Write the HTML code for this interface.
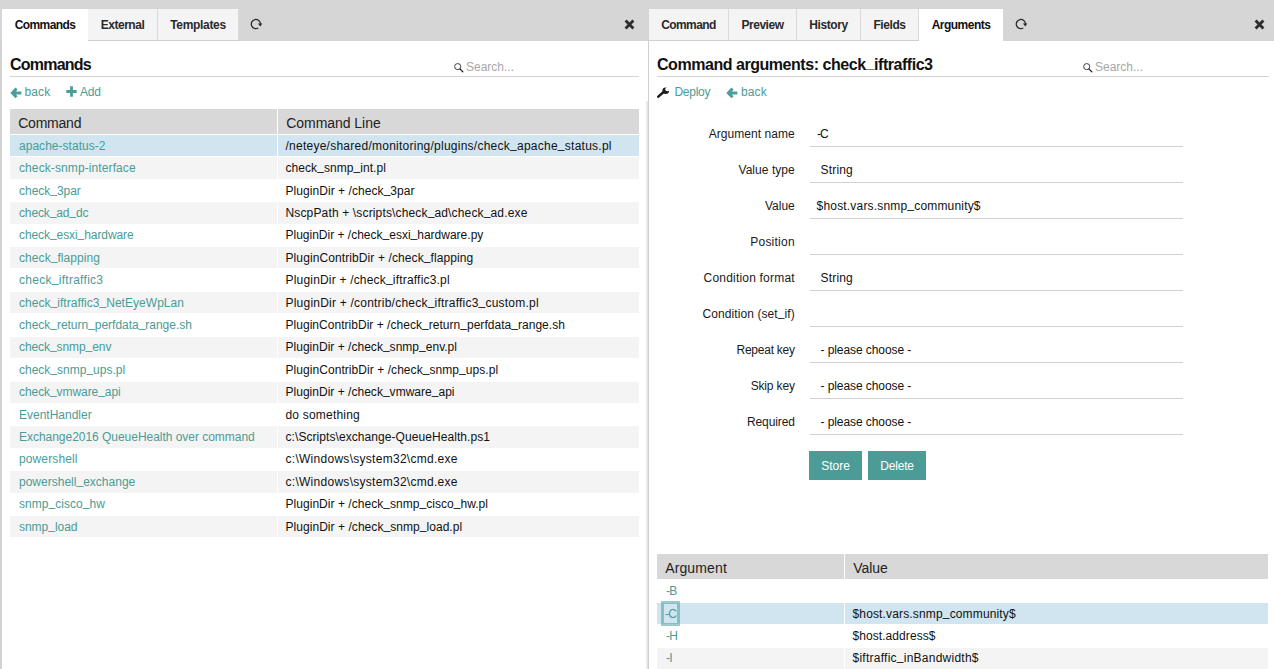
<!DOCTYPE html>
<html lang="en"><head><meta charset="utf-8"><title>Commands</title>
<style>
*{box-sizing:border-box;margin:0;padding:0}
html,body{width:1274px;height:669px;overflow:hidden;background:#fff}
body{font-family:"Liberation Sans",sans-serif;font-size:12px;color:#111;position:relative}
.t{white-space:pre}
.tabbar{position:absolute;left:0;top:0;width:1274px;height:41px;background:#d6d6d6;z-index:2}
.col{position:absolute;top:0;height:669px}
#col1{left:0;width:648px;border-left:2px solid #d2d2d2}
#col1 > *{margin-left:-2px}
#col2{left:648px;width:626px;border-left:1px solid #cfcfcf}
#col2 > *{margin-left:-1px}
#col2:before{content:"";position:absolute;left:-3px;top:101px;width:2px;bottom:0;background:linear-gradient(to right,#f4f4f4,#dedede);margin:0}
.tabs{position:absolute;left:0;top:9px;height:32px;list-style:none;width:100%;z-index:3}
.tabs li{position:absolute;top:0;height:32px;background:#f4f4f4;border-right:1px solid #dadada;border-bottom:1px solid #d0d0d0;text-align:center;line-height:31px;font-weight:bold;font-size:12px;color:#2a2a2a;white-space:nowrap}
.tabs li a{position:relative;top:1px}
.tabs li.active{background:#fff;border:0;color:#111}
.abs{position:absolute;display:block;line-height:0;z-index:3}
h1{position:absolute;top:54px;height:23px;border-bottom:1px solid #d4d4d4;font-size:16px;font-weight:bold;line-height:22px;color:#111;white-space:nowrap}
.search{position:absolute;top:60px;height:14px;font-size:12px;color:#a8a8a8;line-height:14px;white-space:nowrap}
.search svg{position:absolute;left:0;top:3px}
.search span{position:absolute;left:12px;top:0}
.actions{position:absolute;top:84px;height:16px}
.actions a{position:absolute;top:0;color:#4b9b96;font-size:12px;line-height:16px;white-space:nowrap;height:16px}
.actions a svg{position:absolute;left:0;top:3px}
.actions a svg.ib{left:-0.6px;top:2.6px}
.actions a svg.ip{top:2px}
.actions a span{position:absolute;top:0}
.list{position:absolute;font-size:12px}
.list .hd,.list .row{position:absolute;left:0;width:100%}
.list .c1,.list .c2{position:absolute;top:0;bottom:0;white-space:nowrap;overflow:visible}
.list .c1{left:0}
.list .c2{right:0}
.list .hd .c1,.list .hd .c2{background:#d8d8d8;font-size:14px;line-height:29px;padding-left:8.2px;color:#222}
.list .row .c1,.list .row .c2{line-height:22px;padding-left:9px;color:#111}
.list .row .c2{padding-left:7.5px}
.list .row a{color:#4b9b96}
.list .row.up .c1,.list .row.up .c2{line-height:20px}
.list .row.odd .c1,.list .row.odd .c2{background:#f4f4f4}
.list .row.sel .c1,.list .row.sel .c2{background:#d0e5f0}
form{position:absolute;left:0;top:0;width:100%}
.frow{position:absolute;left:0;height:28px;width:100%}
.frow label{position:absolute;left:0;width:146.8px;text-align:right;top:1px;line-height:27px;font-size:12px;color:#1a1a1a;white-space:nowrap}
.frow .inp{position:absolute;left:162px;width:373px;top:0;height:27px;border-bottom:1px solid #d0d0d0;font-size:12px;white-space:nowrap}
.frow .inp > span{position:absolute;top:1px;line-height:27px}
.btns{position:absolute;left:161px;top:451px;height:29px}
.btns button{position:absolute;top:0;height:29px;border:0;background:#4b9c97;color:#fff;font-family:inherit;font-size:12px;line-height:30px;text-align:center;padding:0}
a.focus{position:relative;display:inline-block;left:-1px}
a.focus:before{content:"";position:absolute;left:-4px;right:-3.5px;top:-2.5px;bottom:-0.5px;border:3px solid rgba(75,158,154,0.55)}
.u{position:relative;top:-0.15em}
</style></head>
<body>
<div class="tabbar"></div>
<div id="col1" class="col">
<ul class="tabs"><li class="active" style="left:2px;width:86px"><a><span class="t" style="letter-spacing:-0.62px">Commands</span></a></li><li style="left:88px;width:70px"><a><span class="t" style="letter-spacing:-0.48px">External</span></a></li><li style="left:158px;width:81px"><a><span class="t" style="letter-spacing:-0.31px">Templates</span></a></li></ul>
<span class="abs" style="left:249px;top:17px"><svg viewBox="0 0 14 14" width="14" height="14"><path d="M9.3 11 A4.6 4.6 0 1 1 11.5 6.9" fill="none" stroke="#2a2a2a" stroke-width="1.3"/><path d="M8.9 6.6 L13.3 6.6 L11.3 9.5 Z" fill="#2a2a2a"/></svg></span><span class="abs" style="left:624px;top:19px"><svg viewBox="0 0 11 11" width="11" height="11"><path d="M1.6 1.6 L9.4 9.4 M9.4 1.6 L1.6 9.4" stroke="#2d2d2d" stroke-width="2.85" fill="none"/></svg></span>
<h1 style="left:10px;width:629px"><span class="t" style="letter-spacing:-0.77px">Commands</span></h1>
<div class="search" style="left:454px"><svg viewBox="0 0 10 10" width="10" height="10"><circle cx="3.7" cy="3.6" r="3.05" fill="none" stroke="#333" stroke-width="0.95"/><path d="M6.1 6.1 L8.8 8.7" stroke="#222" stroke-width="1.3" stroke-linecap="round"/></svg><span>Search...</span></div>
<div class="actions" style="left:10px"><a style="left:1px"><svg class="ib" viewBox="0 0 11 11" width="11.8" height="11.8"><path d="M0.3 5.5 L5.1 0.5 L7.1 2.4 L5.5 4.1 L10.6 4.1 L10.6 6.9 L5.5 6.9 L7.1 8.6 L5.1 10.5 Z" fill="#4b9e9a"/></svg><span style="left:13.5px"><span class="t" style="letter-spacing:0.11px">back</span></span></a><a style="left:56px"><svg class="ip" viewBox="0 0 11 11" width="11" height="11"><path d="M4.1 0.3 H6.9 V4.1 H10.7 V6.9 H6.9 V10.7 H4.1 V6.9 H0.3 V4.1 H4.1 Z" fill="#4b9e9a"/></svg><span style="left:14px"><span class="t" style="letter-spacing:-0.18px">Add</span></span></a></div>
<div class="list" style="left:10px;top:109px;width:629px"><div class="hd" style="top:0;height:25px"><span class="c1" style="width:267px"><span class="t" style="letter-spacing:-0.22px">Command</span></span><span class="c2" style="left:268px"><span class="t" style="letter-spacing:-0.04px">Command Line</span></span></div>
<div class="row sel" style="top:26px;height:21px"><span class="c1" style="width:267px"><a><span class="t" style="letter-spacing:0.03px">apache-status-2</span></a></span><span class="c2" style="left:268px"><span class="t" style="letter-spacing:0.25px">/neteye/shared/monitoring/plugins/check<span class="u">_</span>apache<span class="u">_</span>status.pl</span></span></div>
<div class="row odd" style="top:48px;height:22px"><span class="c1" style="width:267px"><a><span class="t" style="letter-spacing:0.1px">check-snmp-interface</span></a></span><span class="c2" style="left:268px"><span class="t" style="letter-spacing:0.06px">check<span class="u">_</span>snmp<span class="u">_</span>int.pl</span></span></div>
<div class="row even" style="top:71px;height:21px"><span class="c1" style="width:267px"><a><span class="t" style="letter-spacing:-0.02px">check<span class="u">_</span>3par</span></a></span><span class="c2" style="left:268px"><span class="t" style="letter-spacing:0.06px">PluginDir + /check<span class="u">_</span>3par</span></span></div>
<div class="row odd" style="top:93px;height:22px"><span class="c1" style="width:267px"><a><span class="t" style="letter-spacing:-0.13px">check<span class="u">_</span>ad<span class="u">_</span>dc</span></a></span><span class="c2" style="left:268px"><span class="t" style="letter-spacing:0.15px">NscpPath + \scripts\check<span class="u">_</span>ad\check<span class="u">_</span>ad.exe</span></span></div>
<div class="row even up" style="top:116px;height:21px"><span class="c1" style="width:267px"><a><span class="t" style="letter-spacing:-0.08px">check<span class="u">_</span>esxi<span class="u">_</span>hardware</span></a></span><span class="c2" style="left:268px"><span class="t">PluginDir + /check<span class="u">_</span>esxi<span class="u">_</span>hardware.py</span></span></div>
<div class="row odd" style="top:138px;height:21px"><span class="c1" style="width:267px"><a><span class="t" style="letter-spacing:0.07px">check<span class="u">_</span>flapping</span></a></span><span class="c2" style="left:268px"><span class="t" style="letter-spacing:0.1px">PluginContribDir + /check<span class="u">_</span>flapping</span></span></div>
<div class="row even" style="top:160px;height:22px"><span class="c1" style="width:267px"><a><span class="t" style="letter-spacing:0.28px">check<span class="u">_</span>iftraffic3</span></a></span><span class="c2" style="left:268px"><span class="t" style="letter-spacing:0.19px">PluginDir + /check<span class="u">_</span>iftraffic3.pl</span></span></div>
<div class="row odd" style="top:183px;height:21px"><span class="c1" style="width:267px"><a><span class="t" style="letter-spacing:0.04px">check<span class="u">_</span>iftraffic3<span class="u">_</span>NetEyeWpLan</span></a></span><span class="c2" style="left:268px"><span class="t" style="letter-spacing:0.22px">PluginDir + /contrib/check<span class="u">_</span>iftraffic3<span class="u">_</span>custom.pl</span></span></div>
<div class="row even" style="top:205px;height:22px"><span class="c1" style="width:267px"><a><span class="t" style="letter-spacing:-0.02px">check<span class="u">_</span>return<span class="u">_</span>perfdata<span class="u">_</span>range.sh</span></a></span><span class="c2" style="left:268px"><span class="t" style="letter-spacing:0.03px">PluginContribDir + /check<span class="u">_</span>return<span class="u">_</span>perfdata<span class="u">_</span>range.sh</span></span></div>
<div class="row odd up" style="top:228px;height:21px"><span class="c1" style="width:267px"><a><span class="t" style="letter-spacing:-0.08px">check<span class="u">_</span>snmp<span class="u">_</span>env</span></a></span><span class="c2" style="left:268px"><span class="t" style="letter-spacing:0.02px">PluginDir + /check<span class="u">_</span>snmp<span class="u">_</span>env.pl</span></span></div>
<div class="row even" style="top:250px;height:22px"><span class="c1" style="width:267px"><a><span class="t">check<span class="u">_</span>snmp<span class="u">_</span>ups.pl</span></a></span><span class="c2" style="left:268px"><span class="t" style="letter-spacing:0.06px">PluginContribDir + /check<span class="u">_</span>snmp<span class="u">_</span>ups.pl</span></span></div>
<div class="row odd up" style="top:273px;height:21px"><span class="c1" style="width:267px"><a><span class="t" style="letter-spacing:-0.07px">check<span class="u">_</span>vmware<span class="u">_</span>api</span></a></span><span class="c2" style="left:268px"><span class="t" style="letter-spacing:0.02px">PluginDir + /check<span class="u">_</span>vmware<span class="u">_</span>api</span></span></div>
<div class="row even" style="top:295px;height:21px"><span class="c1" style="width:267px"><a><span class="t">EventHandler</span></a></span><span class="c2" style="left:268px"><span class="t" style="letter-spacing:0.2px">do something</span></span></div>
<div class="row odd" style="top:317px;height:22px"><span class="c1" style="width:267px"><a><span class="t" style="letter-spacing:-0.03px">Exchange2016 QueueHealth over command</span></a></span><span class="c2" style="left:268px"><span class="t" style="letter-spacing:0.07px">c:\Scripts\exchange-QueueHealth.ps1</span></span></div>
<div class="row even up" style="top:340px;height:21px"><span class="c1" style="width:267px"><a><span class="t" style="letter-spacing:0.12px">powershell</span></a></span><span class="c2" style="left:268px"><span class="t" style="letter-spacing:0.28px">c:\Windows\system32\cmd.exe</span></span></div>
<div class="row odd" style="top:362px;height:22px"><span class="c1" style="width:267px"><a><span class="t" style="letter-spacing:0.01px">powershell<span class="u">_</span>exchange</span></a></span><span class="c2" style="left:268px"><span class="t" style="letter-spacing:0.28px">c:\Windows\system32\cmd.exe</span></span></div>
<div class="row even up" style="top:385px;height:21px"><span class="c1" style="width:267px"><a><span class="t" style="letter-spacing:0.04px">snmp<span class="u">_</span>cisco<span class="u">_</span>hw</span></a></span><span class="c2" style="left:268px"><span class="t" style="letter-spacing:0.04px">PluginDir + /check<span class="u">_</span>snmp<span class="u">_</span>cisco<span class="u">_</span>hw.pl</span></span></div>
<div class="row odd" style="top:407px;height:21px"><span class="c1" style="width:267px"><a><span class="t" style="letter-spacing:-0.03px">snmp<span class="u">_</span>load</span></a></span><span class="c2" style="left:268px"><span class="t" style="letter-spacing:0.05px">PluginDir + /check<span class="u">_</span>snmp<span class="u">_</span>load.pl</span></span></div>
</div>
</div>
<div id="col2" class="col">
<ul class="tabs"><li style="left:1px;width:80px"><a><span class="t" style="letter-spacing:-0.56px">Command</span></a></li><li style="left:81px;width:68px"><a><span class="t" style="letter-spacing:-0.45px">Preview</span></a></li><li style="left:149px;width:64px"><a><span class="t" style="letter-spacing:-0.39px">History</span></a></li><li style="left:213px;width:58px"><a><span class="t" style="letter-spacing:-0.42px">Fields</span></a></li><li class="active" style="left:271px;width:84px"><a><span class="t" style="letter-spacing:-0.52px">Arguments</span></a></li></ul>
<span class="abs" style="left:366px;top:17px"><svg viewBox="0 0 14 14" width="14" height="14"><path d="M9.3 11 A4.6 4.6 0 1 1 11.5 6.9" fill="none" stroke="#2a2a2a" stroke-width="1.3"/><path d="M8.9 6.6 L13.3 6.6 L11.3 9.5 Z" fill="#2a2a2a"/></svg></span><span class="abs" style="left:605.5px;top:19px"><svg viewBox="0 0 11 11" width="11" height="11"><path d="M1.6 1.6 L9.4 9.4 M9.4 1.6 L1.6 9.4" stroke="#2d2d2d" stroke-width="2.85" fill="none"/></svg></span>
<h1 style="left:9px;width:612px"><span class="t" style="letter-spacing:-0.46px">Command arguments: check<span class="u">_</span>iftraffic3</span></h1>
<div class="search" style="left:435px"><svg viewBox="0 0 10 10" width="10" height="10"><circle cx="3.7" cy="3.6" r="3.05" fill="none" stroke="#333" stroke-width="0.95"/><path d="M6.1 6.1 L8.8 8.7" stroke="#222" stroke-width="1.3" stroke-linecap="round"/></svg><span>Search...</span></div>
<div class="actions" style="left:9px"><a style="left:0px"><svg viewBox="0 0 12 12" width="12" height="12"><defs><mask id="wm"><rect x="0" y="0" width="12" height="12" fill="#fff"/><circle cx="10.3" cy="2.3" r="2.0" fill="#000"/></mask></defs><g mask="url(#wm)"><path d="M1.3 9.6 L6.9 4.7" stroke="#1c1c1c" stroke-width="2.5" stroke-linecap="round" fill="none"/><circle cx="8.7" cy="3.7" r="3.3" fill="#1c1c1c"/></g></svg><span style="left:17.4px"><span class="t" style="letter-spacing:-0.25px">Deploy</span></span></a><a style="left:70px"><svg class="ib" viewBox="0 0 11 11" width="11.8" height="11.8"><path d="M0.3 5.5 L5.1 0.5 L7.1 2.4 L5.5 4.1 L10.6 4.1 L10.6 6.9 L5.5 6.9 L7.1 8.6 L5.1 10.5 Z" fill="#4b9e9a"/></svg><span style="left:14px"><span class="t" style="letter-spacing:0.11px">back</span></span></a></div>
<form>
<div class="frow" style="top:120px"><label><span class="t" style="letter-spacing:0.06px">Argument name</span></label><div class="inp"><span style="left:6.9px"><span class="t" style="letter-spacing:-0.8px">-C</span></span></div></div>
<div class="frow" style="top:156px"><label><span class="t" style="letter-spacing:0.05px">Value type</span></label><div class="inp"><span style="left:10.6px"><span class="t" style="letter-spacing:0.17px">String</span></span></div></div>
<div class="frow" style="top:192px"><label><span class="t" style="letter-spacing:0.02px">Value</span></label><div class="inp"><span style="left:6.6px"><span class="t" style="letter-spacing:0.18px">$host.vars.snmp<span class="u">_</span>community$</span></span></div></div>
<div class="frow" style="top:228px"><label><span class="t" style="letter-spacing:0.23px">Position</span></label><div class="inp"></div></div>
<div class="frow" style="top:264px"><label><span class="t" style="letter-spacing:0.2px">Condition format</span></label><div class="inp"><span style="left:10.6px"><span class="t" style="letter-spacing:0.17px">String</span></span></div></div>
<div class="frow" style="top:300px"><label><span class="t" style="letter-spacing:0.08px">Condition (set<span class="u">_</span>if)</span></label><div class="inp"></div></div>
<div class="frow" style="top:336px"><label><span class="t" style="letter-spacing:-0.24px">Repeat key</span></label><div class="inp"><span style="left:10.5px"><span class="t" style="letter-spacing:-0.08px">- please choose -</span></span></div></div>
<div class="frow" style="top:372px"><label><span class="t" style="letter-spacing:-0.15px">Skip key</span></label><div class="inp"><span style="left:10.5px"><span class="t" style="letter-spacing:-0.08px">- please choose -</span></span></div></div>
<div class="frow" style="top:408px"><label><span class="t" style="letter-spacing:-0.11px">Required</span></label><div class="inp"><span style="left:10.5px"><span class="t" style="letter-spacing:-0.08px">- please choose -</span></span></div></div>
<div class="btns"><button type="button" style="left:0;width:53px"><span class="t" style="letter-spacing:-0.02px">Store</span></button><button type="button" style="left:59px;width:58px"><span class="t" style="letter-spacing:-0.18px">Delete</span></button></div>
</form>
<div class="list" style="left:9px;top:554px;width:611px"><div class="hd" style="top:0;height:25px"><span class="c1" style="width:187px"><span class="t" style="letter-spacing:0.13px">Argument</span></span><span class="c2" style="left:188px"><span class="t" style="letter-spacing:-0.05px">Value</span></span></div>
<div class="row even" style="top:26px;height:22px"><span class="c1" style="width:187px"><a><span class="t" style="letter-spacing:-0.8px">-B</span></a></span><span class="c2" style="left:188px"></span></div>
<div class="row sel" style="top:49px;height:21px"><span class="c1" style="width:187px"><a class="focus"><span class="t" style="letter-spacing:-0.8px">-C</span></a></span><span class="c2" style="left:188px"><span class="t" style="letter-spacing:0.15px">$host.vars.snmp<span class="u">_</span>community$</span></span></div>
<div class="row even" style="top:71px;height:22px"><span class="c1" style="width:187px"><a><span class="t" style="letter-spacing:-0.8px">-H</span></a></span><span class="c2" style="left:188px"><span class="t" style="letter-spacing:0.07px">$host.address$</span></span></div>
<div class="row odd up" style="top:94px;height:21px"><span class="c1" style="width:187px"><a><span class="t" style="letter-spacing:-0.8px">-I</span></a></span><span class="c2" style="left:188px"><span class="t" style="letter-spacing:0.25px">$iftraffic<span class="u">_</span>inBandwidth$</span></span></div>
</div>
</div>
</body></html>
